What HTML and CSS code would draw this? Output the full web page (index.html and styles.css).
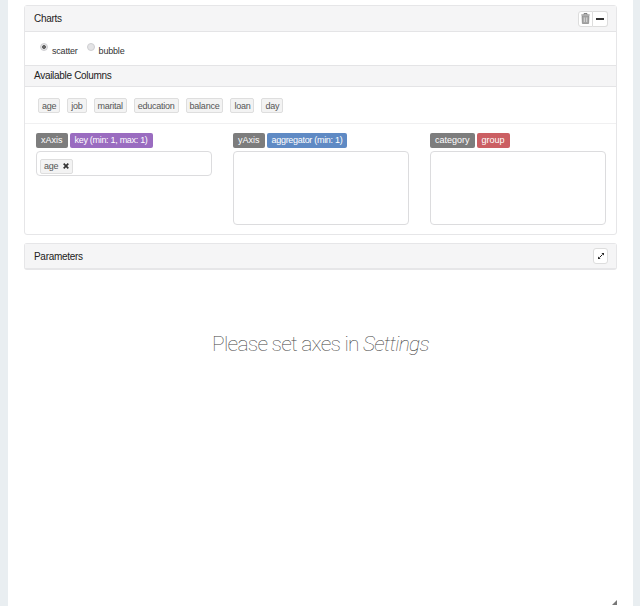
FILE: index.html
```html
<!doctype html>
<html lang="en">
<head>
    <meta charset="utf-8">
    <title>Charts</title>
    <link rel="stylesheet" href="styles.css">
</head>
<body>
    <div class="sheet">
        <div class="panel">
            <div class="panel-head">
                <span class="panel-title">Charts</span>
                <div class="btn-group">
                    <button class="icon-btn">
                        <svg width="9" height="11" viewBox="0 0 9 11"><path d="M3 1.5V.6h3v.9M.3 2h8.4" fill="none" stroke="#777" stroke-width="1"/><path d="M1 3.2l.4 7.3h6.2L8 3.2z" fill="#a5a5a5" stroke="#777" stroke-width=".6"/><path d="M3.3 4.5v4.6M5.7 4.5v4.6" stroke="#eee" stroke-width=".7"/></svg>
                    </button>
                    <button class="icon-btn">
                        <svg width="8" height="2" viewBox="0 0 8 2"><rect width="8" height="2" fill="#333"/></svg>
                    </button>
                </div>
            </div>
            <div class="chart-types">
                <label class="radio-item"><span class="radio checked"></span>scatter</label>
                <label class="radio-item"><span class="radio"></span>bubble</label>
            </div>
            <div class="panel-head sub-head">
                <span class="panel-title">Available Columns</span>
            </div>
            <div class="columns">
                <span class="pill">age</span>
                <span class="pill">job</span>
                <span class="pill">marital</span>
                <span class="pill">education</span>
                <span class="pill">balance</span>
                <span class="pill">loan</span>
                <span class="pill">day</span>
            </div>
            <div class="axes">
                <div class="axis">
                    <div class="axis-labels">
                        <span class="tag tag-gray">xAxis</span>
                        <span class="tag tag-purple">key (min: 1, max: 1)</span>
                    </div>
                    <div class="drop-box short">
                        <span class="pill">age
                            <svg class="remove" width="6" height="6" viewBox="0 0 6 6"><path d="M.7.7l4.6 4.6M5.3.7L.7 5.3" stroke="#333" stroke-width="1.7"/></svg>
                        </span>
                    </div>
                </div>
                <div class="axis">
                    <div class="axis-labels">
                        <span class="tag tag-gray">yAxis</span>
                        <span class="tag tag-blue">aggregator (min: 1)</span>
                    </div>
                    <div class="drop-box"></div>
                </div>
                <div class="axis">
                    <div class="axis-labels">
                        <span class="tag tag-gray">category</span>
                        <span class="tag tag-red">group</span>
                    </div>
                    <div class="drop-box"></div>
                </div>
            </div>
        </div>
        <div class="panel params">
            <div class="panel-head params-head">
                <span class="panel-title">Parameters</span>
                <button class="icon-btn single">
                    <svg width="6" height="6" viewBox="0 0 6 6"><path d="M1.5 4.5l3-3" stroke="#222" stroke-width="1"/><path d="M0 6V3.4L2.6 6zM6 0v2.6L3.4 0z" fill="#222"/></svg>
                </button>
            </div>
        </div>
        <div class="message">Please set axes in <em>Settings</em></div>
        <svg class="resize" width="5" height="5" viewBox="0 0 5 5"><path d="M5 0v5H0z" fill="#777"/></svg>
    </div>
</body>
</html>
```

FILE: styles.css
```css
* {
    box-sizing: border-box;
}
body {
    margin: 0;
    background-color: #e9eef1;
    font-family: "Liberation Sans", Arial, sans-serif;
    color: #333;
}
.sheet {
    position: relative;
    height: 606px;
    margin: 0 7px 0 8px;
    padding: 5px 16px 0;
    background-color: #fff;
}
.panel {
    border: 1px solid #e6e6e8;
    border-radius: 3px;
}
.panel-head {
    display: flex;
    align-items: center;
    justify-content: space-between;
    height: 26px;
    padding: 0 8px 0 9px;
    background-color: #f5f5f6;
    border-bottom: 1px solid #e4e4e6;
}
.panel-title {
    font-size: 10px;
    letter-spacing: -0.3px;
    color: #222;
}
.btn-group {
    display: flex;
}
.icon-btn {
    display: flex;
    align-items: center;
    justify-content: center;
    width: 15px;
    height: 16px;
    padding: 0;
    background-color: #fff;
    border: 1px solid #ddd;
    border-radius: 3px 0 0 3px;
}
.icon-btn + .icon-btn {
    border-left: 0;
    border-radius: 0 3px 3px 0;
}
.icon-btn.single {
    border-radius: 3px;
}
.chart-types {
    display: flex;
    gap: 9px;
    height: 33px;
    padding: 12px 0 0 15px;
}
.radio-item {
    display: flex;
    align-items: flex-start;
    font-size: 9px;
    line-height: 14px;
    letter-spacing: -0.2px;
    color: #333;
}
.radio {
    width: 8px;
    height: 8px;
    margin: -1px 4px 0 0;
    background-color: #e4e4e6;
    border: 1px solid #cfcfd2;
    border-radius: 50%;
}
.radio.checked {
    background: radial-gradient(circle, #666 0 1.6px, #e4e4e6 2.2px);
}
.sub-head {
    height: 22px;
    padding-bottom: 1px;
    border-top: 1px solid #e4e4e6;
}
.columns {
    display: flex;
    gap: 7px;
    height: 37px;
    padding: 11px 0 0 13px;
    border-bottom: 1px solid #f0f0f1;
}
.pill {
    display: inline-flex;
    align-items: center;
    height: 15px;
    padding: 0 3px;
    font-size: 9px;
    letter-spacing: -0.25px;
    color: #555;
    background-color: #f3f3f3;
    border: 1px solid #dedede;
    border-radius: 2px;
}
.remove {
    margin: 0 0 0 5px;
}
.axes {
    display: grid;
    grid-template-columns: repeat(3, 176px);
    gap: 21px;
    height: 110px;
    padding: 9px 0 0 11px;
}
.axis-labels {
    display: flex;
    gap: 2px;
    margin-bottom: 3px;
}
.tag {
    height: 15px;
    padding: 0 5px;
    font-size: 9px;
    line-height: 15px;
    color: #fff;
    border-radius: 2px;
}
.tag-gray {
    background-color: #7d7d7d;
}
.tag-purple {
    letter-spacing: -0.3px;
    background-color: #9a6cc0;
}
.tag-blue {
    letter-spacing: -0.3px;
    background-color: #5f8ac4;
}
.tag-red {
    background-color: #cb5f63;
}
.drop-box {
    height: 74px;
    padding: 3px;
    border: 1px solid #dcdcde;
    border-radius: 4px;
}
.drop-box.short {
    height: 25px;
}
.params {
    margin-top: 8px;
    border-bottom-width: 2px;
}
.params-head {
    height: 24px;
    border-bottom: 0;
}
.message {
    margin-top: 61px;
    text-align: center;
    font-family: Roboto, "Liberation Sans", sans-serif;
    font-size: 21px;
    font-weight: 100;
    letter-spacing: -0.75px;
    line-height: 26px;
    color: #444;
}
.resize {
    position: absolute;
    right: 16px;
    bottom: 1px;
}
```
